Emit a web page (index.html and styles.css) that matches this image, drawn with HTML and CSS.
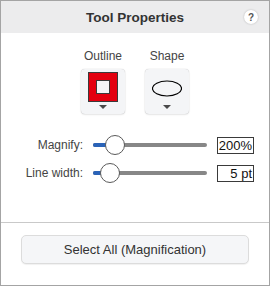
FILE: index.html
```html
<!DOCTYPE html>
<html lang="en">
<head>
    <meta charset="UTF-8">
    <title>Tool Properties</title>
    <link rel="stylesheet" href="styles.css">
</head>
<body>
    <div class="panel">
        <div class="header">
            <span class="title">Tool Properties</span>
            <span class="help">?</span>
        </div>
        <div class="main">
            <div class="tools">
                <div class="tool">
                    <span class="tool-label">Outline</span>
                    <div class="tool-btn">
                        <svg width="30" height="30" viewBox="0 0 30 30">
                            <rect x="0.5" y="0.5" width="29" height="29" fill="#e3000f" stroke="#3a3a3a"/>
                            <rect x="8.5" y="8.5" width="13" height="13" fill="#f4f5f7" stroke="#3a3a3a"/>
                        </svg>
                        <span class="caret"></span>
                    </div>
                </div>
                <div class="tool">
                    <span class="tool-label">Shape</span>
                    <div class="tool-btn">
                        <svg width="30" height="30" viewBox="0 0 30 30">
                            <ellipse cx="15" cy="16.5" rx="14.5" ry="7.5" fill="none" stroke="#000" stroke-width="1.2"/>
                        </svg>
                        <span class="caret"></span>
                    </div>
                </div>
            </div>
            <div class="rows">
                <div class="row">
                    <span class="row-label">Magnify:</span>
                    <div class="slider">
                        <div class="track"></div>
                        <div class="fill" style="width: 14px"></div>
                        <div class="thumb" style="left: 12px"></div>
                    </div>
                    <span class="value">200%</span>
                </div>
                <div class="row">
                    <span class="row-label">Line width:</span>
                    <div class="slider">
                        <div class="track"></div>
                        <div class="fill" style="width: 9px"></div>
                        <div class="thumb" style="left: 7px"></div>
                    </div>
                    <span class="value">5 pt</span>
                </div>
            </div>
        </div>
        <div class="footer">
            <button class="select-all">Select All (Magnification)</button>
        </div>
    </div>
</body>
</html>
```

FILE: styles.css
```css
body {
    margin: 0;
    font-family: "Liberation Sans", Arial, sans-serif;
}
.panel {
    width: 270px;
    height: 286px;
    box-sizing: border-box;
    border: 1px solid #a4a4a4;
    display: flex;
    flex-direction: column;
    background: #fff;
}
.header {
    height: 32px;
    background: #ececed;
    display: grid;
    grid-template-columns: 1fr auto 1fr;
    align-items: center;
}
.title {
    grid-column: 2;
    font-size: 13.5px;
    font-weight: bold;
    color: #333;
}
.help {
    grid-column: 3;
    justify-self: end;
    margin-right: 11px;
    width: 14px;
    height: 14px;
    border-radius: 50%;
    background: #fff;
    box-shadow: 0 0 2px rgba(0, 0, 0, 0.25);
    font-size: 10px;
    font-weight: bold;
    color: #555;
    display: flex;
    align-items: center;
    justify-content: center;
}
.main {
    flex: 1;
}
.tools {
    display: flex;
    justify-content: center;
    gap: 20px;
    padding-top: 17px;
}
.tool {
    display: flex;
    flex-direction: column;
    align-items: center;
    gap: 6px;
}
.tool-label {
    font-size: 12px;
    line-height: 13px;
    color: #444;
}
.tool-btn {
    width: 44px;
    height: 45px;
    box-sizing: border-box;
    padding-top: 3px;
    border-radius: 4px;
    background: #f4f5f7;
    box-shadow: 0 0 1px rgba(0, 0, 0, 0.3), 0 1px 2px rgba(0, 0, 0, 0.08);
    display: flex;
    flex-direction: column;
    align-items: center;
    gap: 3px;
}
.caret {
    width: 0;
    height: 0;
    border-left: 4px solid transparent;
    border-right: 4px solid transparent;
    border-top: 4px solid #4a4a4a;
}
.rows {
    margin-top: 17px;
}
.row {
    display: grid;
    grid-template-columns: 82px 114px 37px;
    column-gap: 10px;
    align-items: center;
    height: 28px;
}
.row-label {
    text-align: right;
    font-size: 12px;
    color: #444;
}
.slider {
    position: relative;
    height: 20px;
}
.track {
    position: absolute;
    left: 0;
    right: 0;
    top: 8px;
    height: 4px;
    border-radius: 2px;
    background: #878787;
}
.fill {
    position: absolute;
    left: 0;
    top: 8px;
    height: 4px;
    border-radius: 2px;
    background: #2a63b8;
}
.thumb {
    position: absolute;
    top: 0;
    width: 18px;
    height: 18px;
    border-radius: 50%;
    background: #fff;
    border: 1px solid #5a5a5a;
}
.value {
    height: 17px;
    box-sizing: border-box;
    border: 1px solid #3a3a3a;
    font-size: 13px;
    line-height: 15px;
    text-align: right;
    padding-right: 1px;
    color: #111;
}
.footer {
    height: 63px;
    box-sizing: border-box;
    border-top: 1px solid #c9c9c9;
    padding-top: 12px;
    display: flex;
    justify-content: center;
    align-items: flex-start;
}
.select-all {
    width: 228px;
    height: 29px;
    border: 1px solid #dcdcdc;
    border-radius: 5px;
    background: #f5f6f8;
    box-shadow: 0 1px 1px rgba(0, 0, 0, 0.06);
    font-family: "Liberation Sans", Arial, sans-serif;
    font-size: 13px;
    color: #333;
}
```
